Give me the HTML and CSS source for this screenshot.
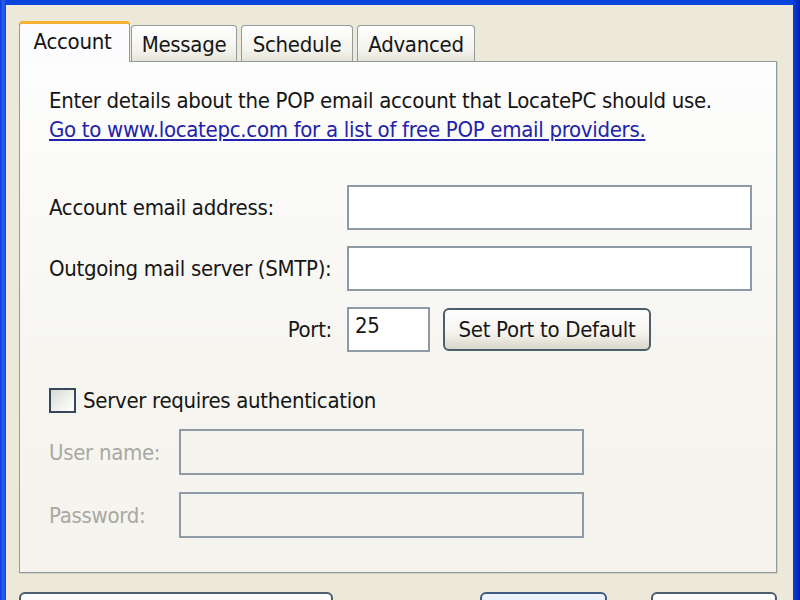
FILE: index.html
```html
<!DOCTYPE html>
<html>
<head>
<meta charset="utf-8">
<link rel="stylesheet" href="styles.css">
</head>
<body>
<div class="frame">
  <div class="dialog">
    <div class="tabs">
      <div class="tab active">Account</div>
      <div class="tab t-message">Message</div>
      <div class="tab t-schedule">Schedule</div>
      <div class="tab t-advanced">Advanced</div>
    </div>
    <div class="panel">
      <p class="intro">Enter details about the POP email account that LocatePC should use.<br><a class="link" href="#">Go to www.locatepc.com for a list of free POP email providers.</a></p>
      <div class="row r-email">
        <span class="label">Account email address:</span>
        <span class="input wide"></span>
      </div>
      <div class="row r-smtp">
        <span class="label">Outgoing mail server (SMTP):</span>
        <span class="input wide"></span>
      </div>
      <div class="row r-port">
        <span class="label port-label">Port:</span>
        <span class="input port">25</span>
        <span class="btn setport">Set Port to Default</span>
      </div>
      <div class="check-row">
        <span class="checkbox"></span>
        <span class="label">Server requires authentication</span>
      </div>
      <div class="row r-user">
        <span class="label dim">User name:</span>
        <span class="input dis"></span>
      </div>
      <div class="row r-pass">
        <span class="label dim">Password:</span>
        <span class="input dis"></span>
      </div>
    </div>
    <div class="buttons">
      <span class="btn b-left"></span>
      <span class="spacer"></span>
      <span class="btn b-ok"></span>
      <span class="btn b-cancel"></span>
    </div>
  </div>
</div>
</body>
</html>
```

FILE: styles.css
```css
html, body {
  margin: 0;
  padding: 0;
  background: #0a3fd8;
}
.frame {
  width: 800px;
  height: 600px;
  overflow: hidden;
  box-sizing: border-box;
  padding: 5px 7px 0 6px;
  background: linear-gradient(to right, #0a3ad6 0, #2a63ef 3px, #0c44e0 6px, #0c44e0 792px, #0021b4 800px);
  font-family: "DejaVu Sans Condensed", "Liberation Sans", sans-serif;
  font-size: 22px;
  letter-spacing: -0.3px;
  color: #161616;
}
.dialog {
  height: 595px;
  background: #ece9d8;
  box-sizing: border-box;
  padding: 16px 16px 0 13px;
  display: flex;
  flex-direction: column;
}
.tabs {
  display: flex;
  align-items: flex-end;
  height: 40px;
  flex-shrink: 0;
  position: relative;
  z-index: 2;
}
.tab {
  box-sizing: border-box;
  height: 36px;
  border: 1px solid #919b9c;
  border-bottom: none;
  border-radius: 4px 4px 0 0;
  background: linear-gradient(#ffffff, #f3f2ec 70%, #e6e4d8);
  text-align: center;
  line-height: 37px;
  margin-right: 4px;
}
.tab.active {
  width: 111px;
  height: 41px;
  margin-bottom: -1px;
  margin-right: 1px;
  background: #fcfcfe;
  border-top: 3px solid #f7b234;
  line-height: 35px;
  padding-right: 4px;
}
.t-message { width: 106px; }
.t-schedule { width: 112px; }
.t-advanced { width: 118px; }
.panel {
  box-sizing: border-box;
  flex-shrink: 0;
  width: 758px;
  height: 512px;
  border: 1px solid #919b9c;
  background: linear-gradient(#fdfdfd, #f6f5f0 60%, #f4f3ee);
  padding: 24px 24px 0 29px;
  box-shadow: 1px 1px 0 #d6d2c2;
}
.intro {
  margin: 0;
  line-height: 29px;
}
.link {
  color: #2222aa;
  text-decoration: underline;
}
.row {
  display: flex;
  align-items: center;
  height: 45px;
}
.r-email { margin-top: 41px; }
.r-smtp, .r-port { margin-top: 16px; }
.r-user { margin-top: 16px; height: 46px; }
.r-pass { margin-top: 17px; height: 46px; }
.label {
  white-space: nowrap;
}
.row .label { width: 298px; }
.r-user .label, .r-pass .label { width: 130px; }
.port-label {
  text-align: right;
  box-sizing: border-box;
  padding-right: 15px;
}
.dim { color: #a9a8a2; }
.input {
  box-sizing: border-box;
  height: 100%;
  border: 2px solid #8e9ba6;
  background: #ffffff;
}
.wide { width: 405px; }
.port {
  width: 83px;
  padding: 0 0 0 6px;
  line-height: 34px;
}
.dis {
  width: 405px;
  background: #f5f4ef;
}
.btn {
  box-sizing: border-box;
  border: 2px solid #4c5e6c;
  border-radius: 6px;
  background: linear-gradient(#ffffff, #f4f3ee 60%, #d9d6c8);
  text-align: center;
}
.setport {
  width: 208px;
  height: 43px;
  margin-left: 13px;
  line-height: 39px;
}
.check-row {
  display: flex;
  align-items: center;
  margin-top: 35px;
  height: 26px;
}
.checkbox {
  box-sizing: border-box;
  width: 27px;
  height: 25px;
  border: 2px solid #36475a;
  background: linear-gradient(135deg, #d8d9d4, #f6f6f3 70%, #ffffff);
  margin-right: 7px;
}
.buttons {
  display: flex;
  flex-shrink: 0;
  margin-top: 19px;
  height: 40px;
}
.b-left { width: 314px; height: 40px; }
.spacer { flex: 0 0 147px; }
.b-ok {
  width: 127px;
  height: 40px;
  border-color: #3f5c82;
  background: linear-gradient(#eef4fd, #dfe8f6);
}
.b-cancel { width: 126px; height: 40px; margin-left: 44px; }
```
